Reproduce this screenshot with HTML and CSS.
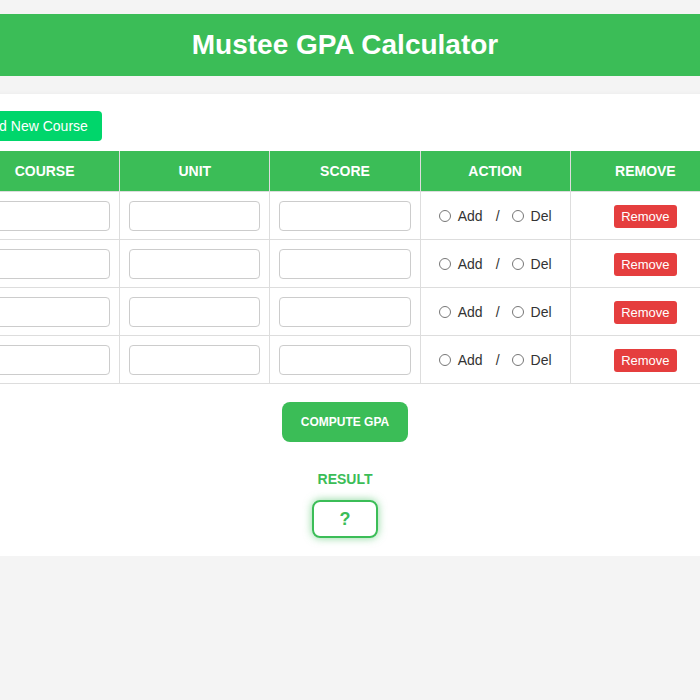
FILE: index.html
```html
<!DOCTYPE html>
<html lang="en">
<head>
<meta charset="utf-8">
<title>Mustee GPA Calculator</title>
<link rel="stylesheet" href="styles.css">
</head>
<body>
<div class="page">
  <header class="topbar">
    <h1 class="title">Mustee GPA Calculator</h1>
  </header>
  <main class="card">
    <div class="toolbar">
      <button class="btn-add">Add New Course</button>
    </div>
    <table class="courses">
      <thead>
        <tr><th>COURSE</th><th>UNIT</th><th>SCORE</th><th>ACTION</th><th>REMOVE</th></tr>
      </thead>
      <tbody>
        <tr>
          <td><input class="field" type="text"></td>
          <td><input class="field" type="text"></td>
          <td><input class="field" type="text"></td>
          <td><div class="action"><label class="opt"><input type="radio" name="a1"><span>Add</span></label><span class="slash">/</span><label class="opt"><input type="radio" name="a1"><span>Del</span></label></div></td>
          <td class="rm"><button class="btn-remove">Remove</button></td>
        </tr>
        <tr>
          <td><input class="field" type="text"></td>
          <td><input class="field" type="text"></td>
          <td><input class="field" type="text"></td>
          <td><div class="action"><label class="opt"><input type="radio" name="a2"><span>Add</span></label><span class="slash">/</span><label class="opt"><input type="radio" name="a2"><span>Del</span></label></div></td>
          <td class="rm"><button class="btn-remove">Remove</button></td>
        </tr>
        <tr>
          <td><input class="field" type="text"></td>
          <td><input class="field" type="text"></td>
          <td><input class="field" type="text"></td>
          <td><div class="action"><label class="opt"><input type="radio" name="a3"><span>Add</span></label><span class="slash">/</span><label class="opt"><input type="radio" name="a3"><span>Del</span></label></div></td>
          <td class="rm"><button class="btn-remove">Remove</button></td>
        </tr>
        <tr>
          <td><input class="field" type="text"></td>
          <td><input class="field" type="text"></td>
          <td><input class="field" type="text"></td>
          <td><div class="action"><label class="opt"><input type="radio" name="a4"><span>Add</span></label><span class="slash">/</span><label class="opt"><input type="radio" name="a4"><span>Del</span></label></div></td>
          <td class="rm"><button class="btn-remove">Remove</button></td>
        </tr>
      </tbody>
    </table>
    <div class="compute">
      <button class="btn-compute">COMPUTE GPA</button>
      <div class="result-label">RESULT</div>
      <div class="result-box">?</div>
    </div>
  </main>
</div>
</body>
</html>
```

FILE: styles.css
```css
html, body {
  margin: 0;
  padding: 0;
}
body {
  background: #f4f4f4;
  font-family: "Liberation Sans", Arial, sans-serif;
  color: #333;
  overflow: hidden;
}
.page {
  width: 690px;
  display: flex;
  flex-direction: column;
  align-items: center;
  padding-top: 14px;
}
.topbar {
  flex-shrink: 0;
  width: 820px;
  height: 62px;
  background: #3bbd57;
  display: flex;
  align-items: center;
  justify-content: center;
}
.title {
  margin: 0;
  color: #fff;
  font-size: 28px;
  font-weight: bold;
}
.card {
  flex-shrink: 0;
  box-sizing: border-box;
  width: 820px;
  margin-top: 18px;
  background: #fff;
  padding: 17px 17px 18px;
  box-shadow: 0 2px 5px rgba(0, 0, 0, 0.1);
}
.toolbar {
  margin: 0 0 10px 16px;
}
.btn-add {
  height: 30px;
  padding: 0 14px;
  border: none;
  border-radius: 4px;
  background: #00d66b;
  color: #fff;
  font-family: inherit;
  font-size: 14px;
}
.courses {
  width: 752px;
  margin: 0 auto;
  border-collapse: collapse;
  table-layout: fixed;
}
.courses th {
  height: 40px;
  padding: 0;
  background: #3bbd57;
  color: #fff;
  font-size: 14px;
  font-weight: bold;
  border: 1px solid #ddd;
  border-top: none;
}
.courses td {
  padding: 9px 9px 8px 9px;
  border: 1px solid #ddd;
  height: 30px;
  text-align: center;
}
.field {
  display: block;
  box-sizing: border-box;
  width: 100%;
  height: 30px;
  border: 1px solid #ccc;
  border-radius: 4px;
  background: #fff;
}
.action {
  display: flex;
  align-items: center;
  justify-content: center;
  font-size: 14px;
  color: #333;
}
.opt {
  display: flex;
  align-items: center;
}
.opt input {
  margin: 0 7px 0 0;
  width: 12px;
  height: 12px;
}
.slash {
  margin: 0 12px 0 13px;
}
.btn-remove {
  height: 23px;
  padding: 0 7px;
  border: none;
  border-radius: 3px;
  background: #e53e3e;
  color: #fff;
  font-family: inherit;
  font-size: 13px;
}
.compute {
  display: flex;
  flex-direction: column;
  align-items: center;
}
.btn-compute {
  margin-top: 18px;
  height: 40px;
  padding: 0 19px;
  border: none;
  border-radius: 8px;
  background: #3bbd57;
  color: #fff;
  font-family: inherit;
  font-size: 12px;
  font-weight: bold;
}
.result-label {
  margin-top: 29px;
  color: #3bbd57;
  font-size: 14px;
  font-weight: bold;
  line-height: 16px;
}
.result-box {
  box-sizing: border-box;
  margin-top: 13px;
  width: 66px;
  height: 38px;
  border: 2px solid #3bbd57;
  border-radius: 8px;
  box-shadow: 0 0 8px rgba(59, 189, 87, 0.6);
  display: flex;
  align-items: center;
  justify-content: center;
  color: #3bbd57;
  font-size: 18px;
  font-weight: bold;
}
```
